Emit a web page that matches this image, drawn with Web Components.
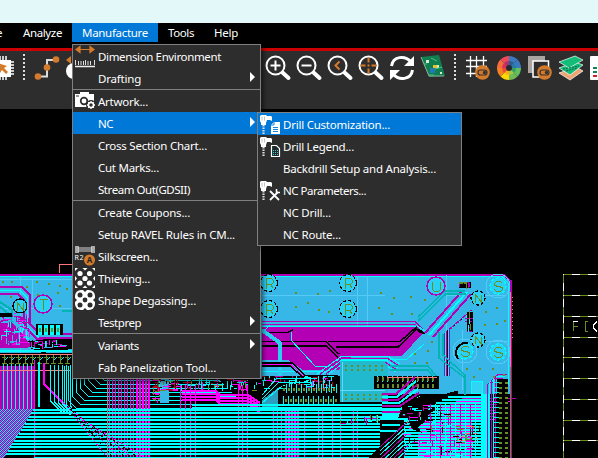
<!DOCTYPE html>
<html lang="en"><head><meta charset="utf-8"><title>Board editor</title>
<style>html,body{margin:0;height:100%;overflow:hidden;background:#000}body{font:12px "Noto Sans","Open Sans",sans-serif;color:#fff}</style></head>
<body><editor-app></editor-app>
<script>
class FitText extends HTMLElement{
 connectedCallback(){
  const r=this.attachShadow({mode:'open'});
  r.innerHTML='<style>:host{display:block;white-space:nowrap}span{display:inline-block}</style><span><slot></slot></span>';
  const s=r.querySelector('span'),w=+this.getAttribute('w');
  if(w){const n=s.getBoundingClientRect().width;s.style.letterSpacing=((w-n)/this.textContent.length)+'px'}
 }}
customElements.define('fit-text',FitText);

const drill='<path d="M1 1h5l1 1h4l1 1v4l-2-1H7l-1 3v2H1V9L0 7V2z" fill="#fff"/><path d="M3.500 11v9" stroke="#ddd" stroke-width="2.200" stroke-dasharray="1.500 1"/><path d="M2 2.500v4M4.500 2.500v4" stroke="#999" stroke-width=".6"/>';
const icons={
 dim:'<path d="M1 3.500h18M5 .5l-4 3 4 3zM15 .5l4 3-4 3z" stroke="#d47a2b" fill="#d47a2b" stroke-width="1.200"/><path d="M.5 14v5M3.500 15v4M6 15v4M8.500 15v4M10.500 14v5M13 15v4M15.500 15v4M19.500 14v5" stroke="#ddd"/><path d="M0 20.500h20" stroke="#eee" stroke-width="1.500"/>',
 camera:'<path d="M0 3h5V1h9v2h5v13H0z" fill="#fff"/><circle cx="9" cy="10" r="3.300" fill="none" stroke="#2d2d2d" stroke-width="1.700"/><path d="M1 5h3" stroke="#2d2d2d"/><circle cx="16" cy="14" r="5" fill="#2d2d2d"/><circle cx="16" cy="14" r="2.500" fill="none" stroke="#fff" stroke-width="1.500"/><path d="M16 10v2m0 4v2m-4-4h2m4 0h2m-6.800-2.800 1.200 1.200m3.200 3.200 1.200 1.200m0-5.600-1.200 1.200m-3.200 3.200-1.200 1.200" stroke="#fff" stroke-width="1.300"/>',
 silk:'<path d="M3 1h14v5H3z" fill="#808080"/><path d="M1 0v7M3 0v7M19 0v7M17 0v7" stroke="#eee" stroke-width="1.300" fill="none"/><text x="-.5" y="14" font-size="7" fill="#fff" textLength="9">R2</text><circle cx="14.500" cy="14" r="5.500" fill="#d47a2b"/><text x="11.800" y="17" font-size="8" font-weight="bold" fill="#222">A</text>',
 thieve:'<path d="M0 0h20v20H0z" fill="#2d2d2d"/><g fill="#fff"><circle cx="5" cy="5.500" r="2.600"/><circle cx="14.500" cy="5.500" r="2.600"/><circle cx="10" cy="10.500" r="2.600"/><circle cx="5" cy="15" r="2.600"/><circle cx="14.500" cy="15" r="2.600"/><path d="M7.500 0h5L10 2.500zM7.500 20h5L10 17.500zM0 8v5l2-2.500zM20 8v5l-2-2.500zM0 0h3L0 3zM20 0h-3l3 3zM0 20h3l-3-3zM20 20h-3l3-3z"/></g>',
 degas:'<rect width="20" height="20" rx="6" fill="#fff"/><g fill="#2d2d2d"><circle cx="5" cy="5" r="2.500"/><circle cx="15" cy="5" r="2.500"/><circle cx="10" cy="10" r="2.400"/><circle cx="5" cy="15" r="2.500"/><circle cx="15" cy="15" r="2.500"/><path d="M8 0h4l-2 2zM8 20h4l-2-2zM0 8v4l2-2zM20 8v4l-2-2z"/></g>',
 d1:drill+'<path d="M14 8h6v12h-9v-9z" fill="#fff"/><path d="M14 8v3h-3M13 13.500h5m-5 2h5m-5 2h5" stroke="#0078d7" fill="none" stroke-width=".9"/>',
 d2:drill+'<path d="M11.500 9.500h5l3 3v8h-8z" fill="#1d292b" stroke="#fff" stroke-width="1.200"/><path d="M13 14.500h5m-5 2h5m-5 2h5" stroke="#4cc" stroke-dasharray="1 1"/>',
 d3:drill+'<path d="m10 11 9 9m-9 0 8-8" stroke="#fff" stroke-width="1.800"/><path d="M16.500 9v3.500h3.500" stroke="#fff" stroke-width="1.500" fill="none"/>'};

class MenuItem extends HTMLElement{
 connectedCallback(){
  const i=this.getAttribute('icon');
  this.attachShadow({mode:'open'}).innerHTML=`<style>:host{display:grid;grid-template-columns:25px 1fr 14px;height:22px;align-items:center;line-height:18px}
  :host([active]){background:#0078d7}svg{display:block;overflow:visible;margin-left:2px;margin-top:1px}b{width:0;height:0;border:5px solid transparent;border-left:5px solid #fff;border-right:0;margin:-2px 0 0 4px}.i{align-self:start}.c{padding-top:2px}</style>
  <div class="i">${i?`<svg width="21" height="21" viewBox="0 0 21 21">${icons[i]}</svg>`:''}</div><div class="c"><slot></slot></div>${this.hasAttribute('sub')?'<b></b>':''}`;
 }}
customElements.define('menu-item',MenuItem);

class MenuPanel extends HTMLElement{
 constructor(){super();this.attachShadow({mode:'open'}).innerHTML='<style>:host{display:block;box-sizing:border-box;background:#2d2d2d;border:1px solid #808080;box-shadow:3px 3px 4px #0007}::slotted(hr){height:1px;margin:0;border:0;background:#808080}</style><slot></slot>'}}
customElements.define('menu-panel',MenuPanel);

class MenuTab extends HTMLElement{
 constructor(){super();this.attachShadow({mode:'open'}).innerHTML='<style>:host{display:block;height:19px;line-height:20px;padding:0 10px}:host([active]){background:#0078d7}</style><slot></slot>'}}
customElements.define('menu-tab',MenuTab);

class ToolBar extends HTMLElement{
 connectedCallback(){
  const mag=(x,inner)=>`<g transform="translate(${x} 65.500)"><path d="M7 7l6 5.500" stroke="#fff" stroke-width="4" stroke-linecap="round"/><circle r="9" fill="#2d2d2d" stroke="#fff" stroke-width="2"/>${inner}</g>`;
  const tog=(x,y)=>`<circle cx="${x}" cy="${y}" r="7.300" fill="#d47a2b"/><rect x="${x-4.5}" y="${y-2.5}" width="9" height="5" rx="2.500" fill="none" stroke="#333" stroke-width="1.200"/><circle cx="${x+2}" cy="${y}" r="1.700" fill="#333"/>`;
  let wheel='';const cs=['#3a79bd','#3a79bd','#60c060','#70b858','#ffd800','#f58220','#f26f3d','#f04858'];
  const cs2=['#2a5c8c','#277aa8','#37a060','#a8c844','#f8b018','#ee4b3c','#d83055','#a83270'];
  for(let i=0;i<8;i++){const a=(i-2)*Math.PI/4,b=a+Math.PI/4,p=(r,t)=>(509+r*Math.cos(t)).toFixed(2)+' '+(68+r*Math.sin(t)).toFixed(2);
   wheel+=`<path d="M509 68L${p(12,a)}A12 12 0 0 1 ${p(12,b)}z" fill="${cs[i]}"/><path d="M509 68L${p(7,a)}A7 7 0 0 1 ${p(7,b)}z" fill="${cs2[i]}"/>`}
  this.attachShadow({mode:'open'}).innerHTML=`<style>:host{display:block;height:58px;background:#2d2d2d}svg{display:block}</style>
  <svg width="598" height="58" viewBox="0 51 598 58">
  <path d="M-5 60h16v17H-5z" fill="#fff"/><path d="M0 60v-4m3 4v-4m3 4v-4M0 77v3m3-3v3m3-3v3M11 62h3m-3 3h3m-3 3h3m-3 3h3m-3 3h3" stroke="#fff" stroke-width="1.500"/><path d="M-2 63l9 3-3 2 4 4-2 2-4-4-2 3z" fill="#d47a2b"/>
  <path d="M24 54v27M455 54v27" stroke="#ddd" stroke-width="2" stroke-dasharray="2 2"/>
  <path d="M38 76.500h9V60h9" fill="none" stroke="#ddd" stroke-width="2"/><g fill="#d47a2b"><circle cx="38" cy="76.500" r="3.300"/><circle cx="47" cy="67.500" r="3.300"/><circle cx="56" cy="59.500" r="3.300"/><path d="m66 60 5-4v8z"/></g><circle cx="74" cy="71" r="8" fill="#fff"/>
  ${mag(275.5,'<path d="M-5 0H5M0-5V5" stroke="#fff" stroke-width="2"/>')}${mag(306.5,'<path d="M-5 0H5" stroke="#fff" stroke-width="2"/>')}${mag(337.5,'<path d="M2-4-2 0 2 4" fill="none" stroke="#d47a2b" stroke-width="2"/>')}${mag(368.5,'<path d="M-8 0h5m6 0h5M0-8v5m0 6v5M-1 0h2" stroke="#d47a2b" stroke-width="2"/>')}
  <path d="M391.500 66C393 56 405 55 411 62M412.500 70C411 80 399 81 393 74" fill="none" stroke="#fff" stroke-width="3"/><path d="M414 56v10h-10zM390 80V70h10z" fill="#fff"/>
  <path d="m421 57 18-2 6 21-16 1-8-19z" fill="#117e50"/><path d="m421 57 8 19h15" fill="none" stroke="#94ad9b"/><path d="M426 60h3v3h-3zM436 65h3v3h-3zM440 72h2v2h-2z" fill="#d7e8d3"/><path d="M433 65h4v3h-4z" fill="#e3c42b"/><path d="M430 68h5v5h-5z" fill="#2279b4"/><path d="M424 64h3m4-6 6 3m-2 8 7-2m-13 8h5" stroke="#4ac184"/>
  <path d="M466 60.500h21M466 66.500h21M466 73.500h12M470.500 56v21M476.500 56v21M483.500 56v12" stroke="#fff" stroke-width="1.300"/>${tog(482.5,72.5)}
  ${wheel}<circle cx="509" cy="68" r="3" fill="#252a30"/>
  <path d="M528 56h17v17h-17z" fill="#aaa5a1"/><path d="M533 61h15.500v16H533z" fill="#2d2d2d" stroke="#fff" stroke-width="1.500"/>${tog(544.5,72.5)}
  <g stroke="#fff" stroke-width=".7"><path d="m559 73 17-6 7 4-13 9z" fill="#eda574"/><path d="m559 68 16-6 8 3-13 10z" fill="#12bd78"/><path d="m559 62 16-6 8 4-14 8z" fill="#11bd78"/></g><path d="m563 69 16-3M566 71l11-3" stroke="#125d44" stroke-dasharray="2 1"/>
  <rect x="590" y="56" width="12" height="24" rx="1" fill="#fff"/><path d="M593 68h9M593 72h9" stroke="#11854f" stroke-width="2" stroke-dasharray="4 1"/><path d="M593 76h9" stroke="#d3202b" stroke-width="2" stroke-dasharray="4 1"/></svg>`;
 }}
customElements.define('tool-bar',ToolBar);

class BoardView extends HTMLElement{
 connectedCallback(){
  let s='',seed=7;const C='#0ff',M='#f0f',P='#b400b4',B='#37b6e8',T='#00b4b4',G='#6b8e23',K='#000';
  const rnd=()=>(seed=(seed*16807)%2147483647)/2147483647;
  const R=(x,y,w,h,c)=>s+=`<rect x="${x}" y="${y}" width="${w}" height="${h}" fill="${c}"/>`;
  const L=(d,c,w=1,e='')=>s+=`<path d="${d}" fill="none" stroke="${c}" stroke-width="${w}" ${e}/>`;
  const F=(d,c)=>s+=`<path d="${d}" fill="${c}"/>`;
  const noise=(x,y,w,h,n,cs)=>{for(let i=0;i<n;i++){const v=rnd()<.5,l=2+(rnd()*7|0);R(x+(rnd()*(w-(v?1:l))|0),y+(rnd()*(h-(v?l:1))|0),v?1:l,v?l:1,cs[rnd()*cs.length|0])}};
  s+=`<defs><pattern id="mesh" width="4" height="4" patternUnits="userSpaceOnUse"><rect width="4" height="4" fill="${P}"/><path d="M3 0h1v1H3zM2 1h1v1H2zM1 2h1v1H1zM0 3h1v1H0z" fill="${C}"/><path d="M1 0h1v1H1zM0 1h1v1H0zM3 2h1v1H3zM2 3h1v1H2z" fill="${C}" opacity=".6"/></pattern></defs>`;
  // copper planes
  F('M0 275H504L510 281V394H0z',B);L('M0 274.500H504L511 282V458',P,2);L('M0 276.500H502L508 283V385',C,1);
  L('M0 279.500H262M20 276v78M32 279v26M0 308H72M262 295.500H385M357.500 276v60M367.500 276v60M446 295h60M446 275v60M476 341h32M462 330v60',"#55caf4");
  // left section
  L('M0 287h22l8 8v29l10 10h32',P,2);L('M0 290.500h20l7 7v29l12 11h33',C,1);L('M0 294h18l6 6v26l14 14h34',P,2);L('M0 302l12 8v12M0 307l9 7M62 311h10',T,2);
  F('M0 322h12l12 14 8 12H0z',P);noise(0,313,31,34,100,[P,P,C,B,B,M]);R(0,313,12,4,K);F('M28 346l12-9h32v9z',P);F('M30 348l14-9h28v10l-30 4z',K);noise(28,340,44,10,38,[C,P,M,K,B]);
  R(36,324,27,11,K);for(let x=38;x<62;x+=6){R(x,325,4,10,C);R(x+1,328,2,4,G)}
  R(0,353,72,105,K);R(0,350,72,2,C);R(0,354,72,1,'#ff7f7f');for(let x=2;x<72;x+=7){L(`M${x} 357h4M${x+2} 355v9M${x} 363h5`,G,1);L(`M${x+3} 360l3-3`,C)}
  R(0,366,34,44,P);for(let x=3;x<35;x+=4)L(`M${x}.5 364v46`,C,1);L('M34.500 360v98',M);L('M0 370.500H71','#ff7f7f');L('M38.500 362v45',C,2);L('M44 363v21l22 22',M,2);
  for(let i=0;i<6;i++)L(`M${50+i*4}.5 365v${36+i}l12 12`,C);
  F('M0 409h34L4 458H0z','url(#mesh)');
  // right magenta plane and traces
  F('M262 327H417L423 333 402 356H352L338 370H303L288 360H262z',P);L('M262 321.500H415l8 8M262 324.500H416',P,1);L('M262 326.500H418l8 5',C,1);
  L('M262 332.500h26l5-3M262 341.500h64l12 12h2M262 346h64l12 11M328 341.500H400l17-15M336 347H398l19-18',K,1.5);
  L('M291 332v8l24 26h19M262 333l8-8M262 371h65l12-12h68l17-15',C,1);L('M262 330l18 13v33','#2acff0',4);
  for(let i=0;i<5;i++)L(`M${317+i*3} 382v-8l${25-i*3} ${-18+i*2}h${46-i}l${12} 8`,i%2?P:C,1);
  L('M262 363h30l14 13h32M262 366h28l14 12h34',K,1.5);L('M262 364.500h29l14 13h33',M);
  R(262,376,78,34,K);noise(262,376,76,14,70,[C,P,M,C,'#b00020',C]);F('M262 400l16-12v20h-16z','#2a9fc0');
  L('M262 395l15-17h40M262 399l17-17h32v10M262 403l20-17M318 376v14M323 376v15M329 380v12',C);
  for(let x=283;x<338;x+=5){R(x,388,2,3,G);R(x+2,399,2,3,G);L(`M${x+3}.5 384v9M${x}.5 396v9`,C)}
  F('M340 361h44l4 5v36H340z','#20b9cd');L('M340 390h45M342 362v40','#65d7ff');for(let x=345;x<383;x+=6){R(x,365,2,2,G);R(x,369,2,2,G);R(x,394,2,2,G);R(x,398,2,2,G)}
  // lower fan-out
  R(72,379,190,79,K);for(let i=0;i<9;i++)L(`M${64+i*4} 366v${38-i*4}l8 8h${180-i*8}`,C,1);
  for(let x=109;x<151;x+=3)R(x,379,x>134?2:1,79,M);F('M160 379h9v24h-9z',B);noise(152,378,112,14,120,[C,C,C,M,M,K,G,'#b00020']);noise(152,380,9,24,24,[G,K,'#b00020',M]);
  for(let i=0;i<4;i++)L(`M182 ${391+i*3}h34l4 4h28l12 8`,M,2);
  for(const x of [180,185,190,195,238,242,247])L(`M${x}.5 385v73`,M,1);
  R(340,403,110,55,K);for(const x of [273,277,281,285,288,291,294,297,304,318,322,332,340,353,357])R(x,408,x>284&&x<298?2:1,50,M);
  const rows=(x,y,w,h)=>{for(let q=y;q<y+h;q+=3.4)R(x,Math.round(q),w,2,C)};
  rows(34,409,366,49);rows(192,404,190,4);
  for(let y=411;y<458;y+=3.4){const x=34-(y-409)*.6;R(Math.round(x),Math.round(y)-2,Math.ceil(34-x),2,C)}
  for(let i=0;i<7;i++)L(`M${62+i*3} ${400+i*3}l${44+i*3} ${56-i*3}`,i%2?K:M,1,'stroke-dasharray="2 2"');
  noise(340,414,42,12,24,[K,G,K,P,C]);F('M368 458l12-11h8v11z',K);L('M107.500 379v79','#89908c');
  // right half of board
  for(let i=0;i<5;i++)L(`M${425+i*2} ${333+i}L${463+i*2} ${290+i}`,i%2?B:i==2?C:P,2);
  for(let i=0;i<6;i++)L(`M${444+i}.5 376V${334-i}l22 -19`,[P,C,P,K,C,P][i],1);
  L('M418 317l27-26h20M418 321l28-27h20M439 332v26l26 20v17M443 334v21l22 20v17M390 366h38l8 10M390 370h38l8 10',T,1.5);
  R(374,376,65,13,K);for(let x=377;x<437;x+=5){L(`M${x}.5 376v6`,C);R(x,377,2,4,G);R(x,384,2,4,G)}L('M387 377h50','#ff7777');
  for(let i=0;i<8;i++)L(`M${382} ${394+i*3}h${14+i}l19 -${17-i}`,i%2?C:P,2);
  F('M380 418h18l6-14 20-9h73v63H380z',K);
  for(let y=396;y<458;y+=3){const x=y<404?448-(y-396)*2:y<419?428:404;R(x,y,490-x,2,C);R(x+14,y+2,54,1,y%2?M:P)}
  for(let x=430;x<476;x+=5)L(`M${x}.5 404v54`,x%2?C:P,1);noise(403,404,50,30,60,[C,M,K,G,P,K]);noise(455,426,26,18,30,[K,G,'#ff7777',P]);noise(403,434,76,24,50,[C,C,M,K,P]);
  L('M436 398l22-6M423 417l12-9',K,3);
  L('M380 419h28M382 425h18M380 431h18',C,2);F('M409 421h17l-8 6 4 6-10-4z',K);for(let i=0;i<8;i++)L(`M380 ${447+i*4}l27 -25`,i%3?C:P);
  R(481,394,8,64,C);R(471,381,11,12,'#32d4f4');L('M471 381h11v12h-11z',C);
  for(let i=0;i<5;i++)L(`M${487+i*2} 458V${385-i*2}l4 -3h8`,i%2?C:P,1);
  R(497,379,11,79,K);for(let y=382;y<458;y+=5){L(`M494 ${y}.5h5`,C);R(499,y,3,2,G);R(505,y,3,2,G)}L('M511.500 280v178',P);L('M510.500 292v75','#ff7777');L('M510.500 367v91',G);L('M512.500 297v44','#ff7777',1,'stroke-dasharray="1 3"');
  R(459,282,12,6,K);R(467,312,6,20,K);noise(459,282,12,6,8,[C,G,P]);noise(465,311,8,22,12,[G,C,P]);F('M416 328l5 2 4 4-6-1z',K);
  // labelled fiducials
  const fid=(x,y,r,t,o=C,d='stroke-dasharray="3 2"')=>{s+=`<circle cx="${x}" cy="${y}" r="${r}" fill="#2ad1f7" stroke="${o}" stroke-width="${o==P?1.5:1.2}" ${d}/>`;
   const g={N:'M-3 4V-4L3 4V-4',T:'M-4-5H4M0-5V5',R:'M-3 5V-5H2L4-3V-1L2 1H-3M1 1 4 5',S:'M4-3 2-5H-2L-4-3V-1L4 1V3L2 5H-2L-4 3',U:'M-4-5V3L-2 5H2L4 3V-5'}[t];s+=`<path d="${g}" transform="translate(${x+.5} ${y+.5})" fill="none" stroke="${G}"/>`};
  fid(20,306,7,'N',K,'');fid(43,304,9,'T',P,'');fid(269,283,8.5,'R',K);fid(269,309,8.5,'R',K);fid(348,283,8.5,'R',K);fid(348,309,8.5,'R',K);fid(436,286,9,'U',P,'');fid(478,298,7,'N',K);fid(478,340,7,'N',K);
  for(const [x,y] of [[498,286],[465,351],[498,352]]){s+=`<circle cx="${x}" cy="${y}" r="12" fill="none" stroke="#54caf4"/>`;fid(x,y,8,'S')}
  L('M458 359q-5-8 2-14 4-3 8-2',K,2);
  for(const [x,y] of [[2,281],[11,281],[26,286],[36,281],[48,283],[59,285],[10,296],[66,288],[37,294],[59,305],[57,292],[295,292],[317,293],[329,290],[295,306],[307,302],[318,309],[328,311],[380,292],[378,307],[393,297],[410,296],[411,313],[391,313],[424,299],[496,307],[485,311],[496,323],[484,324],[504,320],[466,368],[479,368],[492,368],[473,376],[493,376],[503,374],[431,341],[427,350],[414,353],[426,362],[414,362]])R(x,y,2,2,G);
  L('M59.500 273v-8.500H72','#ff7777');
  // drill chart grid
  const ln=(d)=>{L(d,G);s+=`<path d="${d}" fill="none" stroke="#fff" stroke-dasharray="8 8" stroke-dashoffset="7"/>`};
  ln('M563.500 274v184');[274,295,316,337,357,378,399,420,440].forEach(y=>ln(`M563 ${y}.5h36`));
  L('M573.500 331v-9.500M573.500 326.500h4M588 321.500h-2.500v9.500h2.500',G);L('M573 321.500h5M597 321.500l-4 4v2l4 4','#fff');
  this.attachShadow({mode:'open'}).innerHTML=`<style>:host{display:block;flex:1;background:#000}svg{display:block}</style><svg width="598" height="349" viewBox="0 109 598 349" shape-rendering="crispEdges">${s}</svg>`;
 }}
customElements.define('board-view',BoardView);

class EditorApp extends HTMLElement{
 connectedCallback(){
  const it=(t,w,a='')=>`<menu-item ${a}><fit-text w="${w}">${t}</fit-text></menu-item>`;
  const tab=(t,w,tw,a='')=>`<menu-tab style="width:${w}px;box-sizing:border-box" ${a}><fit-text w="${tw}">${t}</fit-text></menu-tab>`;
  this.attachShadow({mode:'open'}).innerHTML=`<style>:host{display:flex;flex-direction:column;width:598px;height:458px;position:relative;font-size:11.5px}header{height:23px;background:#e3f8f8}nav{display:flex;height:25px;background:#000}.line{height:3px;background:#cd0000}menu-panel{position:absolute}.main{left:72px;top:44px;width:189px}.sub{left:257px;top:112px;width:205px}</style>
  <header></header><nav><menu-tab style="width:17px;box-sizing:border-box;padding:0;margin-left:-4px"><fit-text>e</fit-text></menu-tab>
  ${tab('Analyze',59,39)}${tab('Manufacture',86,66,'active')}${tab('Tools',46,26)}${tab('Help',46,24)}</nav><div class="line"></div><tool-bar></tool-bar><board-view></board-view>
  <menu-panel class="main">${it('Dimension Environment',123,'icon="dim"')+it('Drafting',43,'sub')}<hr>${it('Artwork...',50,'icon="camera"')+it('NC',15,'active sub')+it('Cross Section Chart...',109)+it('Cut Marks...',61)+it('Stream Out(GDSII)',92)}<hr>${it('Create Coupons...',92)+it('Setup RAVEL Rules in CM...',137)+it('Silkscreen...',60,'icon="silk"')+it('Thieving...',52,'icon="thieve"')+it('Shape Degassing...',98,'icon="degas"')+it('Testprep',43,'sub')}<hr>${it('Variants',41,'sub')+it('Fab Panelization Tool...',118)}</menu-panel>
  <menu-panel class="sub">${it('Drill Customization...',107,'active icon="d1"')+it('Drill Legend...',71,'icon="d2"')+it('Backdrill Setup and Analysis...',153)+it('NC Parameters...',83,'icon="d3"')+it('NC Drill...',48)+it('NC Route...',58)}</menu-panel>`;
 }}
customElements.define('editor-app',EditorApp);
</script></body></html>
